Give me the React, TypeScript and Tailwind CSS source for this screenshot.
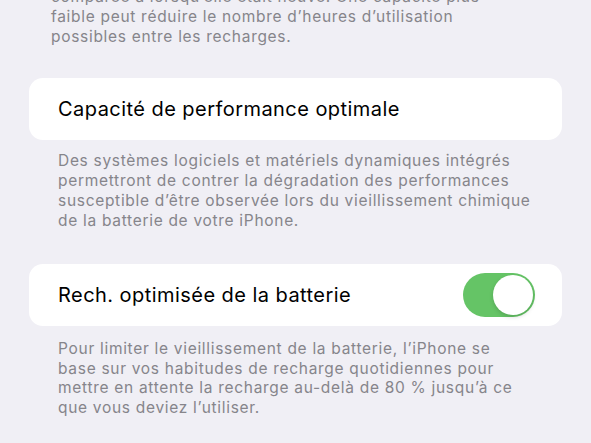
const Lines = ({ lines, className }: { lines: string[]; className: string }) => (
  <p className={className}>
    {lines.map((l, i) => (
      <span key={i} className="block whitespace-nowrap">
        {l}
      </span>
    ))}
  </p>
);

export default function App() {
  const foot = "text-[15.5px] tracking-[0.7px] text-[#86858b]";
  return (
    <div
      className="w-[591px] h-[443px] overflow-hidden bg-[#f0eff5] text-black"
      style={{ fontFamily: "Inter, 'Noto Sans', sans-serif" }}
    >
      {/* scrolled: first footnote line is cut */}
      <Lines
        className={`-mt-[13px] pl-[51px] leading-[20px] ${foot}`}
        lines={[
          "comparée à lorsqu’elle était neuve. Une capacité plus",
          "faible peut réduire le nombre d’heures d’utilisation",
          "possibles entre les recharges.",
        ]}
      />

      <div className="mt-[31px] mx-[29px] h-[62px] rounded-[14px] bg-white flex items-center px-[29px]">
        <span className="text-[20px] tracking-[0.45px]">Capacité de performance optimale</span>
      </div>
      <Lines
        className={`mt-[11px] pl-[58px] leading-[20px] ${foot}`}
        lines={[
          "Des systèmes logiciels et matériels dynamiques intégrés",
          "permettront de contrer la dégradation des performances",
          "susceptible d’être observée lors du vieillissement chimique",
          "de la batterie de votre iPhone.",
        ]}
      />

      <div className="mt-[33px] mx-[29px] h-[62px] rounded-[14px] bg-white flex items-center justify-between pl-[29px] pr-[27px]">
        <span className="text-[20px] tracking-[0.45px]">Rech. optimisée de la batterie</span>
        <div className="w-[72px] h-[44px] rounded-full bg-[#65c466] flex items-center justify-end p-[2px]">
          <div className="w-[40px] h-[40px] rounded-full bg-white shadow-[0_2px_4px_rgba(0,0,0,0.15)]" />
        </div>
      </div>
      <Lines
        className={`mt-[13px] pl-[58px] leading-[19.5px] ${foot}`}
        lines={[
          "Pour limiter le vieillissement de la batterie, l’iPhone se",
          "base sur vos habitudes de recharge quotidiennes pour",
          "mettre en attente la recharge au-delà de 80 % jusqu’à ce",
          "que vous deviez l’utiliser.",
        ]}
      />
    </div>
  );
}
